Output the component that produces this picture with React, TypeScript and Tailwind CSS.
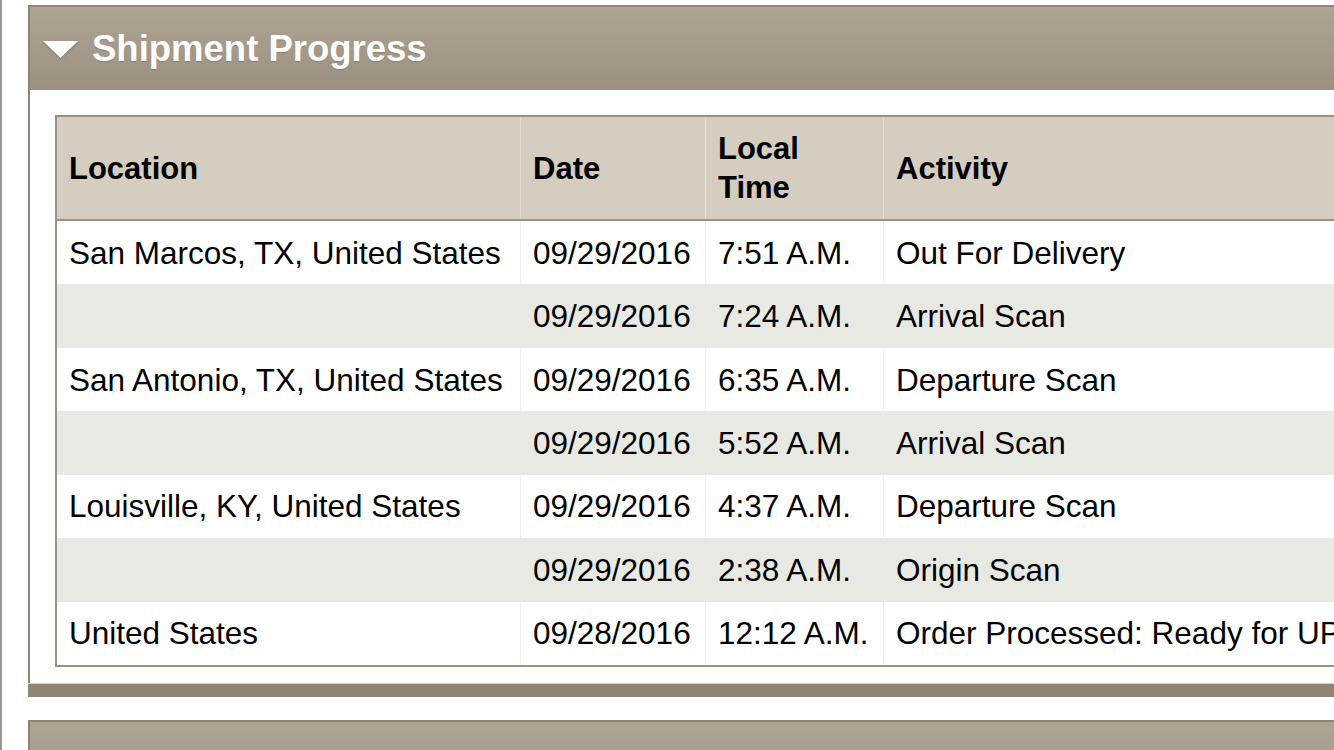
const rows = [
  ["San Marcos, TX, United States", "09/29/2016", "7:51 A.M.", "Out For Delivery"],
  ["", "09/29/2016", "7:24 A.M.", "Arrival Scan"],
  ["San Antonio, TX, United States", "09/29/2016", "6:35 A.M.", "Departure Scan"],
  ["", "09/29/2016", "5:52 A.M.", "Arrival Scan"],
  ["Louisville, KY, United States", "09/29/2016", "4:37 A.M.", "Departure Scan"],
  ["", "09/29/2016", "2:38 A.M.", "Origin Scan"],
  ["United States", "09/28/2016", "12:12 A.M.", "Order Processed: Ready for UPS"],
];

const heads = ["Location", "Date", "Local Time", "Activity"];

export default function App() {
  return (
    <div className="h-[750px] w-[1334px] overflow-hidden bg-white font-['Liberation_Sans',Arial,Helvetica,sans-serif] text-black">
      <div className="flex h-full flex-col border-l-2 border-[#a0968a] pl-[26px] pt-[5px]">
        <section className="w-[1400px] shrink-0">
          <div className="border-l-2 border-[#8f8575]">
            <div className="flex h-[85px] items-center gap-[14px] border-t-2 border-[#8f8575] bg-linear-to-b from-[#aea494] to-[#9c9181] pl-[13px]">
              <svg width="35" height="17" viewBox="0 0 35 17" className="mt-[1px] drop-shadow-[0_1px_1px_rgba(0,0,0,0.25)]">
                <polygon points="0,0 35,0 17.5,17" fill="#ffffff" />
              </svg>
              <h2 className="mt-[2px] text-[36.5px] font-bold leading-none text-white [text-shadow:0_1px_1px_rgba(0,0,0,0.15)]">
                Shipment Progress
              </h2>
            </div>
            <div className="px-[25px] pt-[25px] pb-[16px]">
              <div className="border-2 border-[#9c9282]">
                <div className="grid h-[104px] grid-cols-[464px_185px_178px_1fr] border-b-2 border-[#9c9282] bg-[#d5cdc0]">
                  {heads.map((h, i) => (
                    <div
                      key={h}
                      className={`flex items-center pl-3 pr-3 text-[31px] font-bold leading-[39px] ${
                        i < 3 ? "border-r border-[#e2dcd2]" : ""
                      }`}
                    >
                      {h}
                    </div>
                  ))}
                </div>
                {rows.map((r, ri) => (
                  <div
                    key={ri}
                    className={`grid h-[63.43px] grid-cols-[464px_185px_178px_1fr] ${
                      ri % 2 === 0 ? "bg-white" : "bg-[#e9e9e4]"
                    }`}
                  >
                    {r.map((c, ci) => (
                      <div
                        key={ci}
                        className={`flex items-center whitespace-nowrap pl-3 text-[31.5px] leading-[36px] ${
                          ci < 3 ? (ri % 2 === 0 ? "border-r border-[#f2f1ed]" : "border-r border-[#e9e9e4]") : ""
                        }`}
                      >
                        {c}
                      </div>
                    ))}
                  </div>
                ))}
              </div>
            </div>
          </div>
          <div className="h-[14px] border-t border-[#d6d0c6] bg-[#8f8373]" />
        </section>
        <section className="mt-[23px] h-[60px] w-[1400px] shrink-0 border-l-2 border-t-2 border-[#8f8575] bg-linear-to-b from-[#aea494] to-[#a39886]" />
      </div>
    </div>
  );
}
